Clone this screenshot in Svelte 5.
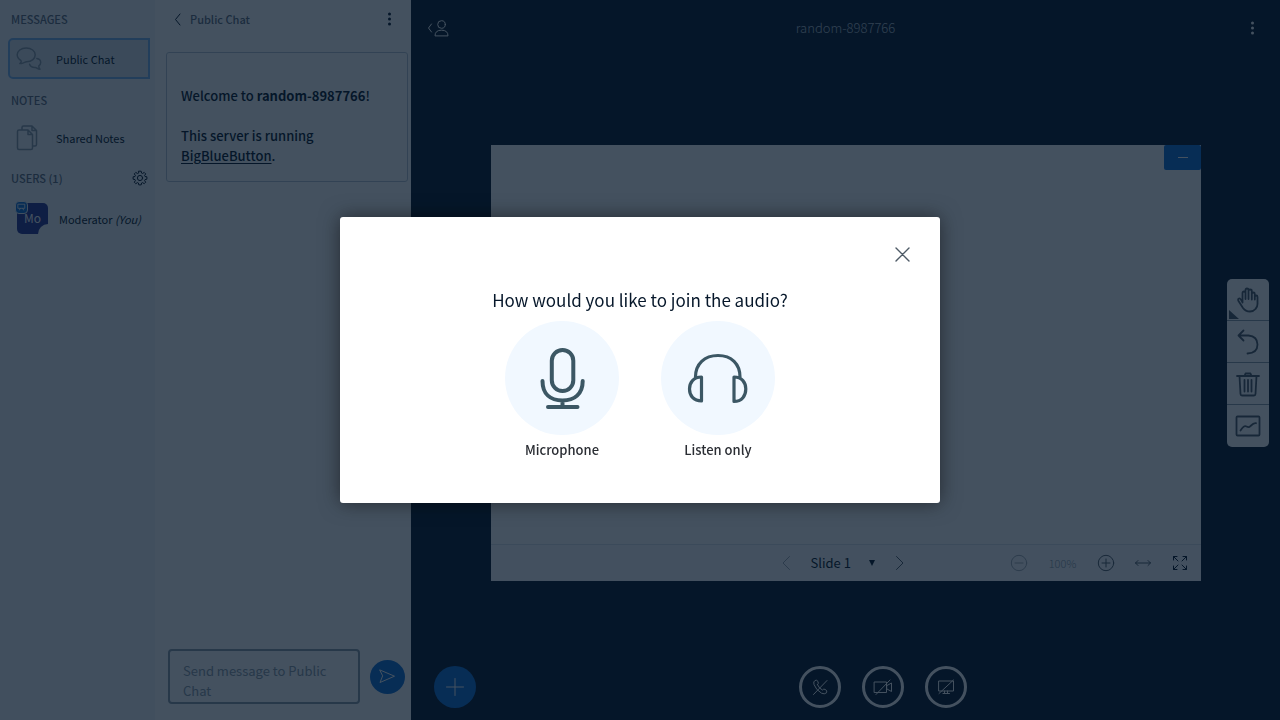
<script>
  const room = 'random-8987766';
  let message = $state('');
  let slide = $state('1');
  let open = $state(true);
</script>

{#snippet dots()}
  <svg width="20" height="20" viewBox="0 0 20 20" fill="currentColor"><circle cx="10.500" cy="5" r="1.500" /><circle cx="10.500" cy="10" r="1.500" /><circle cx="10.500" cy="15" r="1.500" /></svg>
{/snippet}

<div class="app">
  <nav class="users">
    <h2>MESSAGES</h2>
    <button class="item active">
      <svg width="26" height="26" viewBox="0 0 26 26"><path d="M5.5 17.5C8 17.3 9 15.7 10.5 15.7C16 15.7 19.2 12.6 19.2 8.8C19.2 5 15.500 2 10.200 2C5 2 1.200 5 1.200 8.800C1.200 11.300 2.700 13.200 4.900 14.500C5.600 15 5.300 16.500 3.800 17.600ZM20.800 12.500C23.500 13 24.700 14.700 24.700 16.500C24.700 18 24 19 22.800 19.800C22.600 21 23 22 24 23.200C21.800 23.200 20.600 21.500 19.500 21.400C16.500 21.600 14.300 20.200 13.600 18.200" /></svg>
      <span>Public Chat</span>
    </button>
    <h2>NOTES</h2>
    <button class="item">
      <svg width="26" height="26" viewBox="0 0 26 26"><path d="M1.500 6.500Q1.500 5 3 5H12L16.500 9.500V23Q16.500 24.500 15 24.500H3Q1.500 24.500 1.500 23ZM12 5V9.500H16.500M6 5V2.500Q6 1 7.500 1H16L20.500 5.500V19.500Q20.500 21 19 21H16.500M16 1V5.500H20.500" /></svg>
      <span>Shared Notes</span>
    </button>
    <div class="userhead">
      <h2>USERS (1)</h2>
      <button class="plain dark" aria-label="Manage users">
        <svg width="16" height="16" viewBox="0 0 16 16"><circle cx="8" cy="8" r="2.600" /><path d="M6.800 1.200H9.200L9.600 3.100L10.600 3.500L12.200 2.400L13.700 3.900L12.600 5.500L13 6.500L14.900 6.800V9.200L13 9.600L12.600 10.600L13.700 12.200L12.200 13.700L10.600 12.600L9.600 13L9.200 14.900H6.800L6.400 13L5.400 12.600L3.800 13.700L2.300 12.200L3.400 10.600L3 9.600L1.100 9.200V6.800L3 6.500L3.400 5.500L2.300 3.900L3.800 2.400L5.400 3.500L6.400 3.100Z" /></svg>
      </button>
    </div>
    <div class="user">
      <div class="avatar">Mo
        <span class="presenter"><svg width="11" height="11" viewBox="0 0 11 11"><path d="M1.500 1.500H9.500V6.500H1.500ZM4 6.500L3 8.500M7 6.500L8 8.500" /></svg></span>
        <span class="notch"></span>
      </div>
      <span>Moderator <i>(You)</i></span>
    </div>
  </nav>

  <section class="chat">
    <header>
      <button class="back"><svg width="8" height="14" viewBox="0 0 8 14"><path d="M6 2L1.500 7.500L6 13" /></svg>Public Chat</button>
      <button class="plain dark" aria-label="Chat options">{@render dots()}</button>
    </header>
    <div class="welcome">
      <p>Welcome to <b>{room}</b>!</p>
      <p>This server is running <a href="#bbb">BigBlueButton</a>.</p>
    </div>
    <form onsubmit={(e) => e.preventDefault()}>
      <textarea bind:value={message} aria-label="Message" placeholder="Send message to Public Chat"></textarea>
      <button class="send" aria-label="Send message"><svg width="17" height="15" viewBox="0 0 17 15"><path d="M1 1L15.500 7.200L1 13.500L3.500 7.200Z" /></svg></button>
    </form>
  </section>

  <main>
    <header class="bar">
      <button class="plain light" aria-label="Toggle user list">
        <svg width="22" height="18" viewBox="0 0 22 18"><path d="M4.500 5L1.500 9L4.500 13" /><circle cx="14.500" cy="5.500" r="3.800" /><path d="M8 16.500Q8 11.200 14.500 11.200Q21 11.200 21 16.500Z" /></svg>
      </button>
      <h1>{room}</h1>
      <button class="plain light" aria-label="Options">{@render dots()}</button>
    </header>

    <div class="stage">
      <div class="presentation">
        <div class="slide"><button class="minimize" aria-label="Minimize presentation"><svg width="10" height="10" viewBox="0 0 10 10"><path d="M0 5.500H10" /></svg></button></div>
        <div class="controls">
          <div class="pager">
            <button class="plain faint" aria-label="Previous slide"><svg width="10" height="16" viewBox="0 0 10 16"><path d="M8.500 1.500L2 8L8.500 14.500" /></svg></button>
            <div class="pick">
              <select bind:value={slide} aria-label="Slide"><option value="1">Slide 1</option></select>
              <span class="caret"></span>
            </div>
            <button class="plain mid" aria-label="Next slide"><svg width="10" height="16" viewBox="0 0 10 16"><path d="M1.500 1.500L8 8L1.500 14.500" /></svg></button>
          </div>
          <div class="zoom">
            <button class="plain faint" aria-label="Zoom out"><svg width="18" height="18" viewBox="0 0 18 18"><circle cx="9" cy="9" r="7.700" /><path d="M5 9H13" /></svg></button>
            <span>100%</span>
            <button class="plain mid" aria-label="Zoom in"><svg width="18" height="18" viewBox="0 0 18 18"><circle cx="9" cy="9" r="7.700" /><path d="M5 9H13M9 5V13" /></svg></button>
            <button class="plain mid" aria-label="Fit to width"><svg width="18" height="18" viewBox="0 0 18 18"><path d="M1.500 9H16.500M4 6.500L1.500 9L4 11.500M14 6.500L16.500 9L14 11.500" /></svg></button>
            <button class="plain dark" aria-label="Fullscreen"><svg width="18" height="18" viewBox="0 0 18 18"><path d="M2.500 6V2.500H6M2.500 2.500L7 7M12 2.500H15.500V6M15.500 2.500L11 7M2.500 12V15.500H6M2.500 15.500L7 11M12 15.500H15.500V12M15.500 15.500L11 11" /></svg></button>
          </div>
        </div>
      </div>
      <div class="tools">
        <button class="hand" aria-label="Pan">
          <svg width="26" height="26" viewBox="0 0 26 26"><path d="M7.500 15.500V6Q7.500 4.500 9 4.500Q10.500 4.500 10.500 6V12V3Q10.500 1.500 12 1.500Q13.500 1.500 13.500 3V12V4Q13.500 2.500 15 2.500Q16.800 2.500 16.800 4V12.500V7Q16.800 5.500 18.300 5.500Q19.800 5.500 19.800 7V12.500M19.800 12V10Q19.800 8.500 21.300 8.500Q22.500 8.500 22.500 10V17Q22.500 20 20.500 22Q18.500 24.500 15 24.500Q10.500 24.500 8 21L3.500 14Q2.500 12 4 11.500Q5.500 11 7.500 15.500" /></svg>
        </button>
        <button aria-label="Undo"><svg width="26" height="26" viewBox="0 0 26 26"><path d="M8.500 1.500L3.500 6.500L8.500 11.500M3.500 6.500H13.500Q22.500 7.500 22.500 15.500Q22.500 24 12.500 24.500" /></svg></button>
        <button aria-label="Delete all"><svg width="26" height="26" viewBox="0 0 26 26"><path d="M2 5H24M9.500 5L10.500 2.500H15.500L16.500 5M4.500 5L5.500 23Q5.600 24.500 7 24.500H19Q20.400 24.500 20.500 23L21.500 5M9.500 9V20.500M13 9V20.500M16.500 9V20.500" /></svg></button>
        <button aria-label="Multi-user whiteboard"><svg width="26" height="26" viewBox="0 0 26 26"><rect x="1.500" y="3.500" width="23" height="19" rx="1" /><path d="M5.500 17.500Q9 12 11.500 13.500T15.500 13Q19 9.500 21 10.200" /></svg></button>
      </div>
    </div>

    <footer>
      <button class="round add" aria-label="Actions"><svg width="20" height="20" viewBox="0 0 20 20"><path d="M1.500 10H18.500M10 1.500V18.500" /></svg></button>
      <div class="media">
        <button class="round ring" aria-label="Join audio"><svg width="18" height="18" viewBox="0 0 18 18"><path d="M6.500 6.800Q8 5.500 7 3.500Q5.800 1.500 4 2.500Q2 3.500 3 6.500Q5 12 10.500 15.200Q13.500 16.600 15.500 14.800Q16.500 13 14.500 11.500Q12.500 10.500 11.500 12Q8.500 11 6.500 6.800M2.500 16.500L16 2.500" /></svg></button>
        <button class="round ring" aria-label="Share webcam"><svg width="20" height="18" viewBox="0 0 20 18"><path d="M1.500 4H13.500V14.500H1.500ZM14 7.500L18.500 5V13.500L14 11ZM3 16.500L17 2" /></svg></button>
        <button class="round ring" aria-label="Share screen"><svg width="18" height="18" viewBox="0 0 18 18"><path d="M2 3H16.500V13H2ZM7.500 13V15.200M10.500 13V15.200M6 15.500H12.500M2 15.500L16.500 2" /></svg></button>
      </div>
    </footer>
  </main>
</div>

{#if open}
  <div class="overlay">
    <div class="modal" role="dialog" aria-modal="true" aria-labelledby="join-title">
      <button class="close" aria-label="Close" onclick={() => (open = false)}><svg width="16" height="16" viewBox="0 0 16 16"><path d="M2 2L15 15M15 2L2 15" /></svg></button>
      <h2 id="join-title">How would you like to join the audio?</h2>
      <div class="choices">
        <button class="choice">
          <span class="disc"><svg width="64" height="64" viewBox="0 0 64 64" stroke-width="4"><rect x="21.800" y="4" width="21.500" height="41" rx="10.700" /><path d="M12.500 35C12.500 48 20.500 54.500 32.500 54.500S52.700 48 52.700 35M32.500 55V60M18 61H47.500" /></svg></span>
          Microphone
        </button>
        <button class="choice">
          <span class="disc"><svg width="64" height="64" viewBox="0 0 64 64" stroke-width="3.200"><path d="M9.500 31C9.500 18 18.500 9.500 32 9.500S54 18 54 31M15.500 31V55C7.500 55 3.500 49.500 3.500 43S7.500 31 15.500 31ZM48 31V55.500C56 55.500 59.800 49.500 59.800 43S56 31 48 31Z" /></svg></span>
          Listen only
        </button>
      </div>
    </div>
  </div>
{/if}

<style>
  :global(body) { background: #06172a; }
  .app, .overlay {
    font-family: "Noto Sans CJK SC", "Noto Sans", sans-serif;
    font-size: 13px;
    line-height: 20px;
    color: #06172a;
  }
  *, *::before { box-sizing: border-box; }
  button, select, textarea { font: inherit; color: inherit; border: 0; background: none; padding: 0; margin: 0; }
  button { cursor: pointer; }
  h1, h2, p { margin: 0; }
  svg { display: block; fill: none; stroke: currentColor; stroke-linecap: round; stroke-linejoin: round; }
  .plain { display: flex; }
  .plain svg[fill] { fill: currentColor; stroke: none; }
  .dark { color: #06172a; }
  .light { color: #fff; }
  .mid { color: #4e5a66; }
  .faint { color: #a0a9b3; }

  .app { display: grid; grid-template-columns: 155px 256px 1fr; height: 100vh; }
  .users { background: #f3f6f9; padding: 9px 5px 0 8px; font-size: 11px; }
  .users h2 { font-size: 11px; line-height: 20px; font-weight: 500; color: #5f6d7c; padding-left: 3px; }
  .item { display: flex; align-items: center; gap: 14px; width: 142px; height: 41px; padding: 0 6px; margin: 9px 0 11px; border: 2px solid transparent; border-radius: 5px 0 0 5px; font-size: 11px; }
  .item svg { color: #8b9aa8; stroke-width: 1.5; }
  .item.active { background: #dce4ec; border-color: #7ab2f0; }
  .item + h2 + .item { margin: 7px 0 10px; }
  .userhead { display: flex; align-items: center; justify-content: space-between; padding-right: 2px; }
  .user { display: flex; align-items: center; gap: 11px; margin-top: 15px; padding-left: 9px; }
  .avatar { position: relative; width: 31px; height: 31px; border-radius: 5px; background: #283593; color: #fff; text-align: center; line-height: 30px; font-size: 12px; }
  .presenter { position: absolute; left: -2px; top: -2px; padding: 1px; border: 1px solid #f3f6f9; border-radius: 4px; background: #0f70d7; }
  .presenter svg { width: 9px; height: 9px; }
  .notch { position: absolute; right: 0; bottom: 0; width: 10px; height: 10px; border-radius: 10px 0 0; background: #f3f6f9; }

  .chat { display: flex; flex-direction: column; background: #fff; padding: 9px 3px 16px 11px; min-width: 0; }
  .chat header { display: flex; justify-content: space-between; padding: 0 9px 0 8px; height: 43px; align-items: flex-start; }
  .back { display: flex; align-items: center; gap: 8px; font-size: 11px; font-weight: 500; color: #5f6d7c; }
  .back svg { color: #06172a; }
  .welcome { border: 1px solid #b8c4d4; border-radius: 3px; padding: 33px 14px 15px; font-weight: 500; }
  .welcome p + p { margin-top: 20px; }
  .welcome b { font-weight: 700; }
  .welcome a { color: inherit; text-underline-offset: 2px; }
  .chat form { display: flex; align-items: center; gap: 10px; margin-top: auto; padding: 0 3px 0 2px; }
  textarea { flex: 1; min-width: 0; height: 55px; padding: 10px 13px 0; border: 2px solid #8b9aa8; border-radius: 4px; resize: none; overflow: hidden; }
  textarea::placeholder { color: #8b9aa8; opacity: 1; }
  .send { display: grid; place-items: center; width: 35px; height: 34px; border-radius: 50%; background: #0f70d7; color: #fff; }

  main { display: flex; flex-direction: column; min-width: 0; background: #06172a; }
  .bar { display: flex; align-items: center; justify-content: space-between; height: 56px; padding: 0 18px 0 16px; }
  .bar h1 { font-size: 13px; font-weight: 300; color: #b0bbc6; }
  .stage { flex: 1; display: grid; grid-template-columns: 80px 1fr 79px; align-items: center; padding-top: 16px; }
  .presentation { grid-column: 2; background: #fff; }
  .slide { display: flex; justify-content: flex-end; align-items: flex-start; aspect-ratio: 16 / 9; }
  .minimize { display: grid; place-items: center; width: 37px; height: 25px; background: #0f70d7; color: #fff; border-radius: 2px; }
  .controls { display: grid; grid-template-columns: 1fr auto 1fr; align-items: center; height: 37px; border-top: 1px solid #dce4ec; background: #fbfcfd; }
  .pager { grid-column: 2; display: flex; align-items: center; gap: 20px; padding-right: 7px; }
  .pick { display: flex; align-items: center; gap: 8px; width: 64px; justify-content: space-between; }
  select { appearance: none; }
  .caret { border: 3px solid transparent; border-top: 6px solid #06172a; border-bottom: 0; }
  .zoom { display: flex; align-items: center; justify-content: flex-end; gap: 19px; padding-right: 12px; font-size: 11px; font-weight: 300; color: #8b9aa8; }
  .zoom span { width: 31px; text-align: center; }
  .tools { display: flex; flex-direction: column; justify-self: end; width: 42px; margin-right: 11px; border-radius: 5px; background: #fff; overflow: hidden; }
  .tools button { display: grid; place-items: center; height: 42px; color: #4e5a66; }
  .tools button:not(:last-child) { border-bottom: 1px solid #8b9aa8; }
  .tools svg { stroke-width: 1.8; }
  .tools .hand { position: relative; }
  .hand::after { content: ""; position: absolute; left: 2px; bottom: 1px; border-left: 10px solid #4e5a66; border-top: 9px solid transparent; }
  footer { display: flex; align-items: center; height: 66px; padding-left: 23px; gap: 10px; }
  .round { display: grid; place-items: center; width: 42px; height: 42px; border-radius: 50%; color: #fff; }
  .add { background: #0f70d7; }
  .media { flex: 1; display: flex; justify-content: center; gap: 21px; }
  .ring { border: 3px solid #fff; }

  .overlay { position: fixed; inset: 0; display: flex; align-items: center; justify-content: center; background: rgba(6, 23, 42, 0.75); }
  .modal { display: flex; flex-direction: column; align-items: center; width: min(600px, 90vw); padding: 29px 30px 43px; background: #fff; border-radius: 3px; box-shadow: 0 0 20px rgba(0, 0, 0, 0.5); }
  .close { align-self: flex-end; color: #4e5a66; }
  .close svg { stroke-width: 1.4; }
  .modal h2 { margin-top: 26px; font-size: 17px; line-height: 24px; font-weight: 400; }
  .choices { display: flex; gap: 42px; margin-top: 9px; }
  .choice { width: 114px; font-weight: 500; color: #2a2d33; }
  .disc { display: grid; place-items: center; height: 114px; margin-bottom: 5px; border-radius: 50%; background: #f1f8ff; color: #3c5764; }
</style>
